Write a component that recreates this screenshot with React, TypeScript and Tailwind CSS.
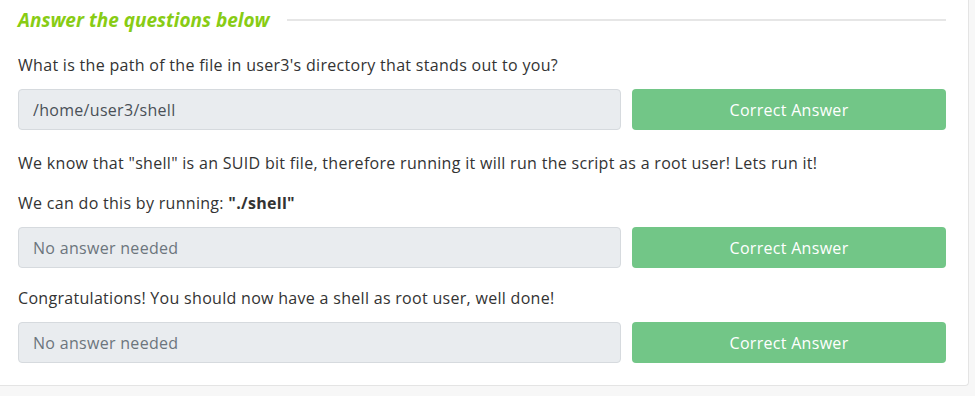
import React from "react";

const font = { fontFamily: '"Open Sans", "Noto Sans", sans-serif' };

const AnswerRow = ({ value, placeholder }: { value?: string; placeholder?: string }) => (
  <div className="mt-[12px] flex gap-[11px]">
    <input
      disabled
      value={value ?? ""}
      placeholder={placeholder}
      className="h-[41px] w-[603px] rounded-[4px] border border-[#d6dade] bg-[#e9ecef] px-[14px] text-[16px] tracking-[0.3px] text-[#495057] placeholder:text-[#6c757d] outline-none"
    />
    <button
      type="button"
      className="h-[41px] w-[314px] rounded-[4px] bg-[#72c687] text-[16px] tracking-[0.3px] text-white"
    >
      Correct Answer
    </button>
  </div>
);

const App = () => {
  return (
    <div className="min-h-screen w-[975px] bg-[#f7f7f7]" style={font}>
      <div className="w-[969px] rounded-br-[4px] border-r border-b border-[#e4e4e4] bg-white pt-[6px] pr-[22px] pb-[22px] pl-[18px] text-[16px] leading-[24px] tracking-[0.3px] text-[#333333]">
        <div className="flex h-[28px] items-center">
          <h5 className="text-[19px] font-bold italic leading-[28px] tracking-normal text-[#88cc14]">
            Answer the questions below
          </h5>
          <div className="ml-[17px] h-[2px] flex-1 bg-[#e6e6e6]" />
        </div>

        <p className="mt-[19px]">
          What is the path of the file in user3's directory that stands out to you?
        </p>
        <AnswerRow value="/home/user3/shell" />

        <p className="mt-[21px]">
          We know that "shell" is an SUID bit file, therefore running it will run the script as a
          root user! Lets run it!
        </p>
        <p className="mt-[16px]">
          We can do this by running: <b>"./shell"</b>
        </p>
        <AnswerRow placeholder="No answer needed" />

        <p className="mt-[18px]">
          Congratulations! You should now have a shell as root user, well done!
        </p>
        <AnswerRow placeholder="No answer needed" />
      </div>
    </div>
  );
};

export default App;
